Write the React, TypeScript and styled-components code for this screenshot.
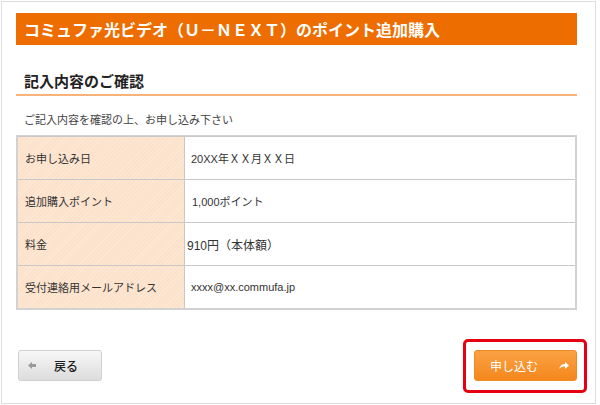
import styled, { createGlobalStyle } from "styled-components";
import { Fragment } from "react";

const GlobalStyle = createGlobalStyle`
  html, body {
    margin: 0;
    padding: 0;
    background: #fff;
  }
  body {
    font-family: "Liberation Sans", "Noto Sans CJK JP", sans-serif;
    color: #333;
  }
`

const Frame = styled.div`
  box-sizing: border-box;
  margin: 1px;
  width: 595px;
  height: 403px;
  border: 1px solid #dedede;
  padding: 11px 18px 0 14px;
`
const TitleBar = styled.h1`
  margin: 0;
  height: 32px;
  background: #ee6d00;
  color: #fff;
  font-size: 16px;
  font-weight: bold;
  line-height: 33px;
  padding-left: 8px;
  font-family: "Noto Sans CJK JP", sans-serif;
`
const Heading = styled.h2`
  margin: 25px 0 0;
  padding: 0 8px 3px;
  font-size: 15px;
  line-height: 21px;
  font-weight: bold;
  color: #222;
  border-bottom: 2px solid #f9b27a;
  font-family: "Noto Sans CJK JP", sans-serif;
`
const Intro = styled.p`
  margin: 16px 0 0;
  padding-left: 8px;
  font-size: 11px;
  line-height: 16px;
  color: #444;
`
const Table = styled.div`
  margin-top: 7px;
  border: 2px solid #d2d2d2;
  border-top-width: 1px;
  display: grid;
  grid-template-columns: 167px 1fr;
`
const Label = styled.div`
  height: 42px;
  display: flex;
  align-items: center;
  padding-left: 7px;
  font-size: 11px;
  color: #333;
  border-top: 1px solid #c8c8c8;
  border-right: 1px solid #c8c8c8;
  background-color: #fde2cb;
  background-image: repeating-linear-gradient(
    135deg,
    rgba(255, 255, 255, 0.22) 0 1px,
    transparent 1px 3px
  );
`
const Value = styled.div<{ $indent: number; $size: number }>`
  height: 42px;
  display: flex;
  align-items: center;
  padding-left: ${props => `${props.$indent}px`};
  font-size: ${props => `${props.$size}px`};
  color: #333;
  border-top: 1px solid #c8c8c8;
  background: #fff;
`
const Footer = styled.div`
  margin-top: 40px;
  display: flex;
  justify-content: space-between;
  align-items: center;
`
const BackButton = styled.button`
  box-sizing: border-box;
  width: 84px;
  height: 31px;
  margin-left: 2px;
  display: flex;
  align-items: center;
  padding: 0 0 0 9px;
  gap: 18px;
  border: 1px solid #d0d0d0;
  border-radius: 3px;
  background: linear-gradient(#f7f7f7, #dcdcdc);
  font-family: inherit;
  font-size: 12px;
  font-weight: 500;
  color: #222;
`
const Highlight = styled.div`
  margin: -11px -10px -12px 0;
  padding: 8px 7px 9px 8px;
  border: 3px solid #e60012;
  border-radius: 5px;
`
const SubmitButton = styled.button`
  box-sizing: border-box;
  width: 103px;
  height: 31px;
  display: flex;
  align-items: center;
  justify-content: flex-end;
  padding: 0 7px 0 0;
  gap: 21px;
  border: 1px solid #f08a22;
  border-radius: 3px;
  background: linear-gradient(#fba245, #f5871c);
  font-family: inherit;
  font-size: 12px;
  color: #fff;
`

const rows = [
  { label: "お申し込み日", value: "20XX年ＸＸ月ＸＸ日", indent: 6, size: 11 },
  { label: "追加購入ポイント", value: "1,000ポイント", indent: 7, size: 11 },
  { label: "料金", value: "910円（本体額）", indent: 2, size: 12 },
  { label: "受付連絡用メールアドレス", value: "xxxx@xx.commufa.jp", indent: 6, size: 11 },
]

const App = () => {
  return (
    <>
      <GlobalStyle/>
      <Frame>
        <TitleBar>コミュファ光ビデオ（Ｕ－ＮＥＸＴ）のポイント追加購入</TitleBar>
        <Heading>記入内容のご確認</Heading>
        <Intro>ご記入内容を確認の上、お申し込み下さい</Intro>
        <Table>
          {rows.map(row => (
            <Fragment key={row.label}>
              <Label>{row.label}</Label>
              <Value $indent={row.indent} $size={row.size}>{row.value}</Value>
            </Fragment>
          ))}
        </Table>
        <Footer>
          <BackButton>
            <svg width="8" height="7" viewBox="0 0 8 7">
              <path d="M0 3.5 L4 0 V2 H8 V5 H4 V7 Z" fill="#9a9a9a"/>
            </svg>
            戻る
          </BackButton>
          <Highlight>
            <SubmitButton>
              申し込む
              <svg width="10" height="8" viewBox="0 0 10 8">
                <path d="M10 3.5 L6 0 V2 C3 2 1 3.5 0 7 C1.8 5 3.5 4.6 6 4.6 V7 Z" fill="#fff"/>
              </svg>
            </SubmitButton>
          </Highlight>
        </Footer>
      </Frame>
    </>
  );
};

export default App;
